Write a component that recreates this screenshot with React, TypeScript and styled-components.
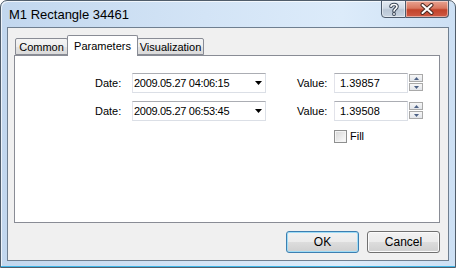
import React from "react";
import styled, { createGlobalStyle } from "styled-components";

const GlobalStyle = createGlobalStyle`
    body {
        margin: 0;
        background: #ffffff;
        font-family: "Liberation Sans", Arial, sans-serif;
    }
`;

const Window = styled.div`
    width: 456px;
    height: 268px;
    box-sizing: border-box;
    border: 1px solid #505d6b;
    border-radius: 7px 7px 0 0;
    background: linear-gradient(to right, #c2d7ee 0%, #d3e4f6 45%, #dcebfa 75%, #cde0f4 100%);
    box-shadow: inset 0 -1px 0 #3fb6e8, inset 1px 1px 0 rgba(255, 255, 255, 0.7);
    padding: 0 6px 6px;
    display: flex;
    flex-direction: column;
`;

const TitleBar = styled.div`
    height: 26px;
    display: flex;
    align-items: flex-start;
    justify-content: space-between;
`;

const Title = styled.div`
    align-self: center;
    margin-left: 2px;
    font-size: 13px;
    color: #000000;
`;

const CaptionButtons = styled.div`
    display: flex;
    margin-top: -1px;
`;

const CaptionButton = styled.div<{ $close?: boolean }>`
    width: ${({ $close }) => ($close ? "43px" : "25px")};
    height: 18px;
    box-sizing: border-box;
    border: 1px solid #4d5b6c;
    border-left-width: ${({ $close }) => ($close ? "0" : "1px")};
    border-radius: ${({ $close }) => ($close ? "0 0 4px 0" : "0 0 0 4px")};
    background: ${({ $close }) =>
        $close
            ? "linear-gradient(#e8a392 0%, #d9775f 45%, #c2432b 55%, #cf5a45 100%)"
            : "linear-gradient(#e4ebf3 0%, #cfd9e5 45%, #b9c6d5 55%, #c9d5e2 100%)"};
    box-shadow: inset 0 0 0 1px rgba(255, 255, 255, 0.45);
    display: flex;
    align-items: center;
    justify-content: center;
`;

const Client = styled.div`
    flex: 1;
    border: 1px solid #6f7f90;
    background: #f0f0f0;
    display: flex;
    flex-direction: column;
    padding: 7px 8px 0 6px;
`;

const TabStrip = styled.div`
    height: 20px;
    display: flex;
    align-items: flex-end;
    padding-left: 1px;
`;

const Tab = styled.div<{ $active?: boolean; $width: number }>`
    width: ${({ $width }) => $width}px;
    height: ${({ $active }) => ($active ? "21px" : "17px")};
    margin-bottom: ${({ $active }) => ($active ? "-1px" : "0")};
    box-sizing: border-box;
    border: 1px solid #898c95;
    border-bottom: ${({ $active }) => ($active ? "none" : "1px solid #898c95")};
    border-radius: 2px 2px 0 0;
    background: ${({ $active }) =>
        $active ? "#ffffff" : "linear-gradient(#f4f4f4 0%, #eeeeee 50%, #e4e4e4 51%, #dadada 100%)"};
    position: relative;
    z-index: ${({ $active }) => ($active ? 1 : 0)};
    display: flex;
    align-items: center;
    justify-content: center;
    padding-top: ${({ $active }) => ($active ? "0" : "1px")};
    font-size: 11px;
    color: #000000;
    & + & {
        margin-left: -1px;
    }
`;

const Panel = styled.div`
    height: 168px;
    box-sizing: border-box;
    border: 1px solid #898c95;
    background: #ffffff;
    padding: 17px 0 0 80px;
`;

const FormGrid = styled.div`
    display: grid;
    grid-template-columns: 37px 134px 31px 37px 74px 1px 14px;
    grid-template-rows: 20px 20px 14px;
    row-gap: 8px;
    align-items: center;
    font-size: 11px;
    color: #000000;
`;

const Label = styled.div<{ $col: number }>`
    grid-column: ${({ $col }) => $col};
`;

const Field = styled.div<{ $col: number }>`
    grid-column: ${({ $col }) => $col};
    height: 20px;
    box-sizing: border-box;
    border: 1px solid #dbdfe6;
    border-top-color: #abadb3;
    border-left-color: #e2e3ea;
    background: #ffffff;
    display: flex;
    align-items: center;
    justify-content: space-between;
`;

const DateText = styled.span`
    padding-left: 1px;
    letter-spacing: -0.3px;
`;

const ValueText = styled.span`
    padding-left: 5px;
`;

const DropArrow = styled.svg`
    margin-right: 3px;
`;

const Spinner = styled.div`
    grid-column: 7;
    height: 18px;
    display: flex;
    flex-direction: column;
    gap: 1px;
`;

const SpinButton = styled.div`
    height: 8px;
    box-sizing: border-box;
    border: 1px solid #a9a9a9;
    background: linear-gradient(#f7f7f7, #e2e5ea);
    display: flex;
    align-items: center;
    justify-content: center;
`;

const CheckRow = styled.label`
    grid-column: 5 / span 3;
    display: flex;
    align-items: center;
    gap: 3px;
`;

const CheckBox = styled.span`
    width: 13px;
    height: 13px;
    box-sizing: border-box;
    border: 1px solid #8e8f8f;
    background: linear-gradient(135deg, #d6d6d6, #fdfdfd);
    box-shadow: inset 0 0 0 1px #f4f4f4;
`;

const ButtonRow = styled.div`
    display: flex;
    justify-content: flex-end;
    gap: 8px;
    padding-top: 8px;
`;

const Button = styled.div<{ $default?: boolean }>`
    width: 73px;
    height: 22px;
    box-sizing: border-box;
    border: 1px solid ${({ $default }) => ($default ? "#3c7fb1" : "#707070")};
    border-radius: 3px;
    background: linear-gradient(#f2f2f2 0%, #ebebeb 50%, #dddddd 51%, #cfcfcf 100%);
    box-shadow: inset 0 0 0 1px ${({ $default }) => ($default ? "#9fdcf6" : "#fbfbfb")};
    display: flex;
    align-items: center;
    justify-content: center;
    font-size: 12px;
    color: #000000;
`;

const HelpGlyph = () => (
    <svg width="14" height="14" viewBox="0 0 14 14">
        <path d="M4 4.5 C4 1.8 10 1.8 10 4.6 C10 6.8 7 6.8 7 9" fill="none" stroke="#3a4656" strokeWidth="3.6" strokeLinecap="round" />
        <circle cx="7" cy="12" r="1.9" fill="#3a4656" />
        <path d="M4 4.5 C4 1.8 10 1.8 10 4.6 C10 6.8 7 6.8 7 9" fill="none" stroke="#ffffff" strokeWidth="1.6" strokeLinecap="round" />
        <circle cx="7" cy="12" r="0.9" fill="#ffffff" />
    </svg>
);

const CloseGlyph = () => (
    <svg width="14" height="12" viewBox="0 0 14 12">
        <path d="M2.5 2 L11.5 10 M11.5 2 L2.5 10" stroke="#4a2a24" strokeWidth="4" strokeLinecap="round" />
        <path d="M2.5 2 L11.5 10 M11.5 2 L2.5 10" stroke="#ffffff" strokeWidth="2" strokeLinecap="round" />
    </svg>
);

const Arrow = ({ up }: { up?: boolean }) => (
    <svg width="5" height="3" viewBox="0 0 5 3">
        <polygon points={up ? "2.5,0 5,3 0,3" : "0,0 5,0 2.5,3"} fill="#4d6185" />
    </svg>
);

const ROWS = [
    { date: "2009.05.27 04:06:15", value: "1.39857" },
    { date: "2009.05.27 06:53:45", value: "1.39508" },
];

const App = () => {
    return (
        <>
            <GlobalStyle />
            <Window>
                <TitleBar>
                    <Title>M1 Rectangle 34461</Title>
                    <CaptionButtons>
                        <CaptionButton>
                            <HelpGlyph />
                        </CaptionButton>
                        <CaptionButton $close>
                            <CloseGlyph />
                        </CaptionButton>
                    </CaptionButtons>
                </TitleBar>
                <Client>
                    <TabStrip>
                        <Tab $width={53}>Common</Tab>
                        <Tab $width={71} $active>Parameters</Tab>
                        <Tab $width={67}>Visualization</Tab>
                    </TabStrip>
                    <Panel>
                        <FormGrid>
                            {ROWS.map((row, index) => (
                                <React.Fragment key={index}>
                                    <Label $col={1}>Date:</Label>
                                    <Field $col={2}>
                                        <DateText>{row.date}</DateText>
                                        <DropArrow width="7" height="4" viewBox="0 0 7 4">
                                            <polygon points="0,0 7,0 3.5,4" fill="#000000" />
                                        </DropArrow>
                                    </Field>
                                    <Label $col={4}>Value:</Label>
                                    <Field $col={5}>
                                        <ValueText>{row.value}</ValueText>
                                    </Field>
                                    <Spinner>
                                        <SpinButton>
                                            <Arrow up />
                                        </SpinButton>
                                        <SpinButton>
                                            <Arrow />
                                        </SpinButton>
                                    </Spinner>
                                </React.Fragment>
                            ))}
                            <CheckRow>
                                <CheckBox />
                                Fill
                            </CheckRow>
                        </FormGrid>
                    </Panel>
                    <ButtonRow>
                        <Button $default>OK</Button>
                        <Button>Cancel</Button>
                    </ButtonRow>
                </Client>
            </Window>
        </>
    );
};

export default App;
